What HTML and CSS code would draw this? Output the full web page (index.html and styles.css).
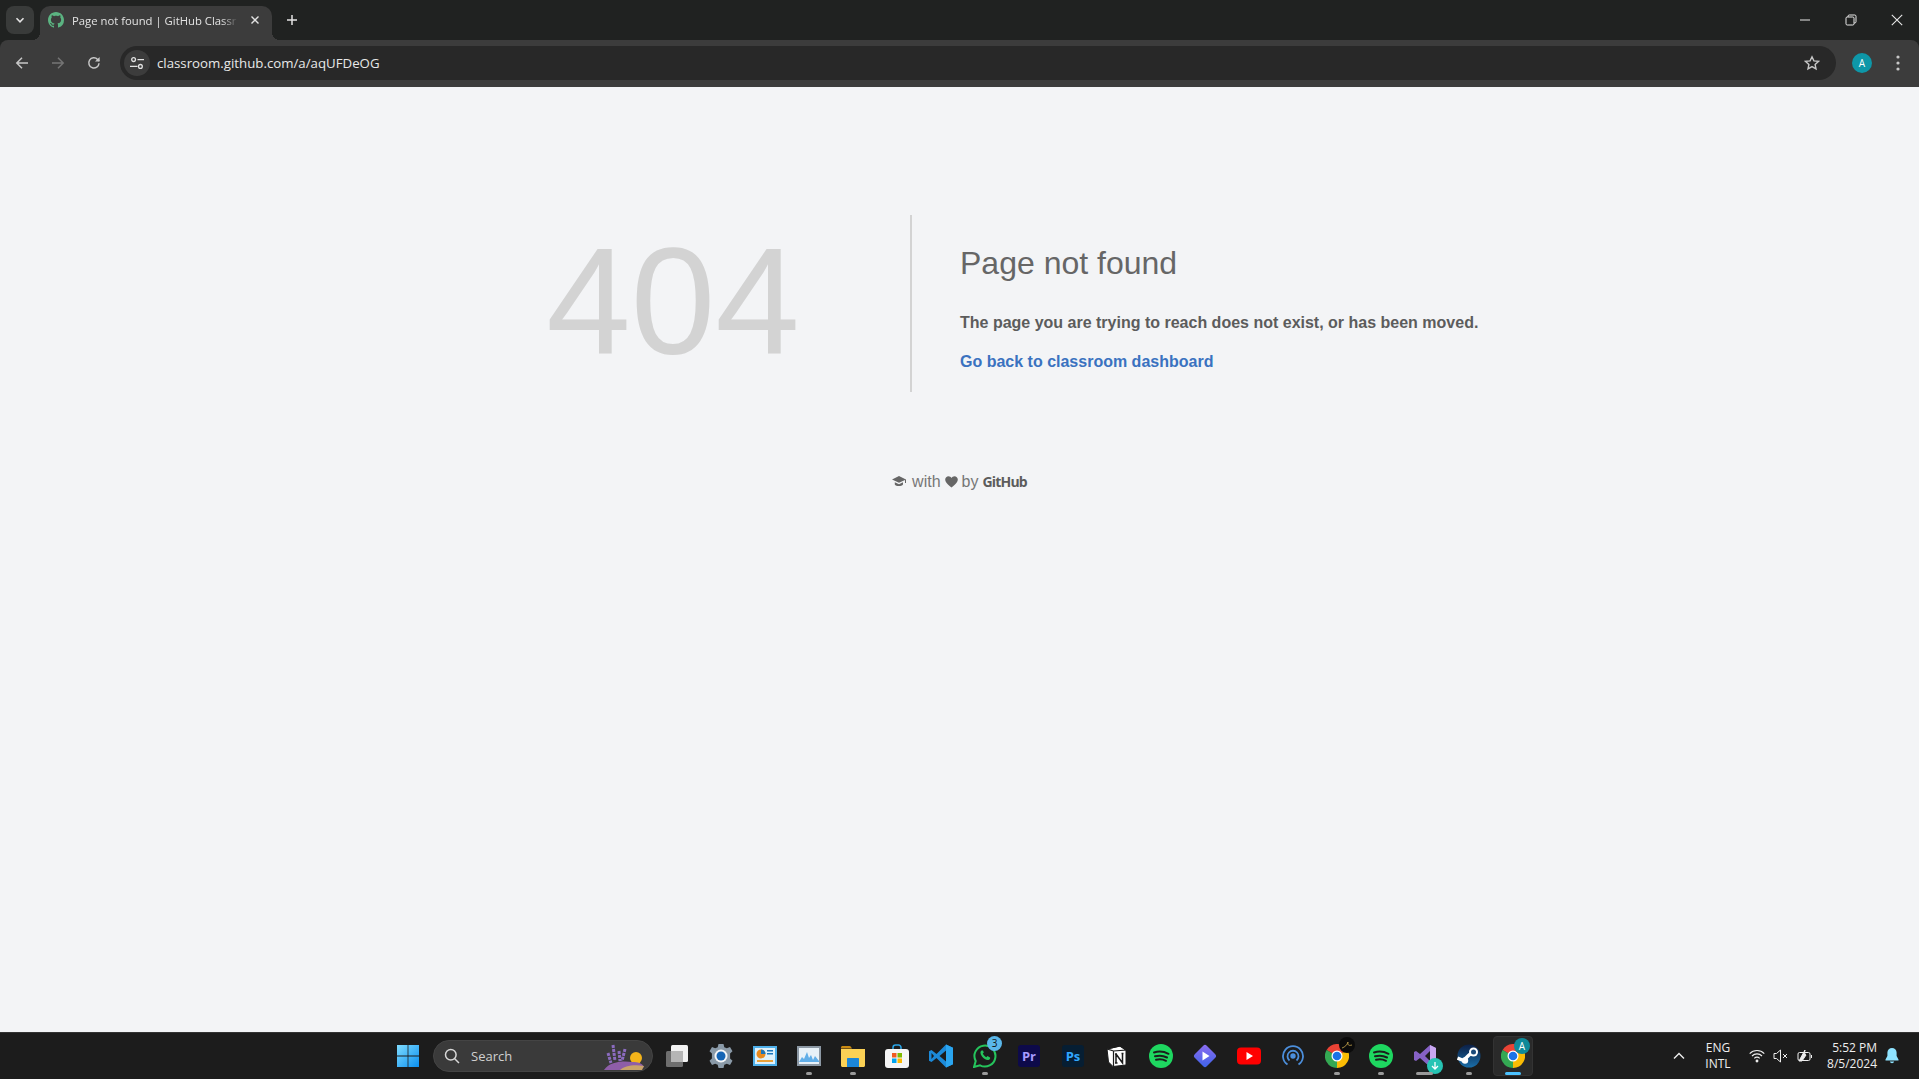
FILE: index.html
```html
<!DOCTYPE html>
<html lang="en">
<head>
    <meta charset="UTF-8">
    <title>Page not found | GitHub Classroom</title>
    <link rel="stylesheet" href="styles.css">
</head>
<body>
    <header class="chrome">
    <div class="tabstrip">
        <button class="tab-search">
            <svg width="12" height="12" viewBox="0 0 12 12"><path d="M2.5 4.3 6 7.8l3.5-3.5" fill="none" stroke="#e3e3e3" stroke-width="1.6"/></svg>
        </button>
        <div class="tab">
            <svg class="tab-favicon" width="16" height="16" viewBox="0 0 16 16"><path fill="#5bb381" d="M8 0C3.58 0 0 3.58 0 8c0 3.54 2.29 6.53 5.47 7.59.4.07.55-.17.55-.38 0-.19-.01-.82-.01-1.49-2.01.37-2.53-.49-2.69-.94-.09-.23-.48-.94-.82-1.13-.28-.15-.68-.52-.01-.53.63-.01 1.08.58 1.23.82.72 1.21 1.87.87 2.33.66.07-.52.28-.87.51-1.07-1.78-.2-3.64-.89-3.64-3.95 0-.87.31-1.59.82-2.15-.08-.2-.36-1.02.08-2.12 0 0 .67-.21 2.2.82.64-.18 1.32-.27 2-.27.68 0 1.36.09 2 .27 1.53-1.04 2.2-.82 2.2-.82.44 1.1.16 1.92.08 2.12.51.56.82 1.27.82 2.15 0 3.07-1.87 3.75-3.65 3.95.29.25.54.73.54 1.48 0 1.07-.01 1.93-.01 2.2 0 .21.15.46.55.38A8.013 8.013 0 0016 8c0-4.42-3.58-8-8-8z"/></svg>
            <span class="tab-title">Page not found | GitHub Classr</span>
            <svg class="tab-close" width="10" height="10" viewBox="0 0 10 10"><path d="M1.5 1.5l7 7M8.5 1.5l-7 7" stroke="#e3e3e3" stroke-width="1.4"/></svg>
        </div>
        <svg class="new-tab" width="12" height="12" viewBox="0 0 12 12"><path d="M6 1v10M1 6h10" stroke="#e3e3e3" stroke-width="1.5"/></svg>
        <div class="window-controls">
            <span class="win-btn"><svg width="12" height="12" viewBox="0 0 12 12"><path d="M1 6h10" stroke="#e8e8e8"/></svg></span>
            <span class="win-btn"><svg width="12" height="12" viewBox="0 0 12 12"><path d="M3 3V2.2C3 1.5 3.5 1 4.2 1h5.6c.7 0 1.2.5 1.2 1.2v5.6c0 .7-.5 1.2-1.2 1.2H9" fill="none" stroke="#e8e8e8"/><rect x="1" y="3" width="8" height="8" rx="1.2" fill="none" stroke="#e8e8e8"/></svg></span>
            <span class="win-btn"><svg width="12" height="12" viewBox="0 0 12 12"><path d="M.8.8l10.4 10.4M11.2.8.8 11.2" stroke="#e8e8e8" stroke-width="1.1"/></svg></span>
        </div>
    </div>

    <div class="toolbar">
        <div class="nav-buttons">
            <svg width="16" height="16" viewBox="0 0 16 16"><path d="M14 8H3M8 2.8 2.8 8 8 13.2" fill="none" stroke="#c7c7c7" stroke-width="1.5"/></svg>
            <svg width="16" height="16" viewBox="0 0 16 16"><path d="M2 8h11M8 2.8 13.2 8 8 13.2" fill="none" stroke="#757575" stroke-width="1.5"/></svg>
            <svg width="16" height="16" viewBox="0 0 16 16"><path d="M13 8.2A5.1 5.1 0 1 1 11.6 4.4L13.2 6" fill="none" stroke="#c7c7c7" stroke-width="1.5"/><path d="M13.6 1.9v4.6H9z" fill="#c7c7c7"/></svg>
        </div>
        <div class="omnibox">
            <span class="site-info">
                <svg width="16" height="16" viewBox="0 0 16 16" fill="none" stroke="#e3e3e3" stroke-width="1.3"><circle cx="4.6" cy="4.6" r="1.9"/><path d="M8.5 4.6H15M1 11.4h7.5"/><circle cx="11.4" cy="11.4" r="1.9"/></svg>
            </span>
            <span class="url">classroom.github.com/a/aqUFDeOG</span>
            <svg class="star" width="16" height="16" viewBox="0 0 16 16"><path d="M8 1.8l1.9 4.1 4.5.5-3.3 3 .9 4.5L8 11.6l-4 2.3.9-4.5-3.3-3 4.5-.5z" fill="none" stroke="#c7c7c7" stroke-width="1.4"/></svg>
        </div>
        <span class="avatar">A</span>
        <svg class="menu-dots" width="4" height="16" viewBox="0 0 4 16" fill="#c7c7c7"><circle cx="2" cy="2" r="1.6"/><circle cx="2" cy="8" r="1.6"/><circle cx="2" cy="14" r="1.6"/></svg>
    </div>
    </header>

    <main class="page">
        <div class="error-row">
            <div class="error-code">404</div>
            <div class="error-text">
                <h1>Page not found</h1>
                <p>The page you are trying to reach does not exist, or has been moved.</p>
                <a href="#">Go back to classroom dashboard</a>
            </div>
        </div>
        <div class="made-with">
            <svg class="cap-icon" width="15" height="11" viewBox="0 0 15 11" fill="#666"><path d="M7 0 0 3.4l7 3.4 6-2.9v3.2h1V3.4z"/><path d="M2.8 6.2v2.2C4 10.6 9.6 10.6 11 8.4V6.2L7 8.2z"/></svg>
            <span>with</span>
            <svg width="13" height="12" viewBox="0 0 13 12" fill="#666"><path d="M6.500 11.600C3 8.800.2 6.600.2 3.600.2 1.600 1.800.2 3.500.2c1.300 0 2.400.7 3 1.800.6-1.100 1.700-1.800 3-1.800 1.700 0 3.300 1.400 3.300 3.400 0 3-2.800 5.200-6.300 8z"/></svg>
            <span>by</span>
            <b class="github-word">GitHub</b>
        </div>
    </main>

    <footer class="taskbar">
        <div class="task-apps">
            <span class="task-item">
                <svg width="24" height="24" viewBox="0 0 24 24"><defs><linearGradient id="winblue" x1="0" y1="0" x2="1" y2="1"><stop offset="0" stop-color="#7fdcff"/><stop offset="1" stop-color="#0a8ff0"/></linearGradient></defs><path fill="url(#winblue)" d="M1 1h10.600v10.600H1zM12.400 1H23v10.600H12.400zM1 12.400h10.600V23H1zM12.400 12.400H23V23H12.400z"/></svg>
            </span>
            <div class="search-box">
                <svg width="16" height="16" viewBox="0 0 16 16" fill="none" stroke="#d8d8d8" stroke-width="1.5"><circle cx="6.800" cy="6.800" r="5.300"/><path d="M10.700 10.700 15 15"/></svg>
                <span>Search</span>
                <svg class="search-art" width="44" height="30" viewBox="0 0 44 30"><path d="M6 12l3 10M11 4l2 16M17 10l1 10M23 8l-3 12" stroke="#8c6cc0" stroke-width="3" stroke-dasharray="3 1"/><circle cx="34" cy="17" r="6" fill="#f4b41a"/><path d="M2 29c6-9 20-9 28-8 6 0 10 1 12 5l-6 3z" fill="#8e5ea8"/><path d="M18 29c4-4 14-6 24-4l-2 4z" fill="#c9a36a"/></svg>
            </div>
            <span class="task-item">
                <svg width="24" height="24" viewBox="0 0 24 24"><rect x="6" y="1" width="17" height="17" rx="1.500" fill="#f1f1f1"/><rect x="1" y="7" width="17" height="16" rx="1.500" fill="#6e6e6e"/><rect x="6" y="7" width="12" height="11" fill="#b5b5b5"/></svg>
            </span>
            <span class="task-item">
                <svg width="24" height="24" viewBox="0 0 24 24"><path d="M9.500 0h5l.8 3.200 2.500 1.100L21 3l2.500 4.300-2.400 2.300v4.800l2.400 2.300L21 21l-3.200-1.300-2.500 1.100L14.500 24h-5l-.8-3.200-2.500-1.100L3 21 .5 16.700l2.400-2.300V9.600L.5 7.300 3 3l3.200 1.300 2.500-1.100z" fill="#8a9aa8"/><circle cx="12" cy="12" r="6.500" fill="#f4f6f8"/><circle cx="12" cy="12" r="4.500" fill="#1565b5"/></svg>
            </span>
            <span class="task-item">
                <svg width="24" height="22" viewBox="0 0 24 22"><rect x="0" y="1" width="24" height="20" fill="#4fb0ea"/><rect x="2" y="3" width="20" height="16" fill="#dff1fb"/><circle cx="8" cy="9" r="4.500" fill="#e98a1f"/><path d="M8 9V4.500A4.500 4.500 0 0 1 12.500 9z" fill="#1b75bb"/><rect x="14" y="5" width="6" height="1.500" fill="#1b75bb"/><rect x="14" y="8" width="6" height="1.500" fill="#1b75bb"/><rect x="4" y="15" width="16" height="2" fill="#e9a23a"/></svg>
            </span>
            <span class="task-item is-open">
                <svg width="24" height="20" viewBox="0 0 24 20"><rect width="24" height="20" fill="#8c98a4"/><rect x="2" y="2" width="20" height="16" fill="#e8f1f8"/><path d="M2 16l3-5 2 2 3-7 2 6 2-3 2 5 2-4 4 5v1H2z" fill="#61aee8"/></svg>
                <i class="run-dot"></i>
            </span>
            <span class="task-item is-open">
                <svg width="24" height="24" viewBox="0 0 24 24"><path d="M0 3.500C0 2.700.7 2 1.500 2h7c.5 0 .9.200 1.200.6L11 4.500h-11z" fill="#c98a12"/><path d="M0 5h24v16.500c0 .8-.7 1.500-1.500 1.500h-21C.7 23 0 22.300 0 21.500z" fill="#fbd155"/><path d="M6 15c0-.6.400-1 1-1h10c.6 0 1 .4 1 1v8H6z" fill="#1b86d8"/></svg>
                <i class="run-dot"></i>
            </span>
            <span class="task-item">
                <svg width="24" height="24" viewBox="0 0 24 24"><path d="M8 6V3.500A2.500 2.500 0 0 1 10.500 1h3A2.500 2.500 0 0 1 16 3.500V6" fill="none" stroke="#2aa5e8" stroke-width="1.500"/><rect y="5" width="24" height="19" rx="3" fill="#f5f5f5"/><rect x="7" y="9" width="4.500" height="4.500" fill="#f05a22"/><rect x="12.500" y="9" width="4.500" height="4.500" fill="#7fba00"/><rect x="7" y="14.500" width="4.500" height="4.500" fill="#00a4ef"/><rect x="12.500" y="14.500" width="4.500" height="4.500" fill="#ffb900"/></svg>
            </span>
            <span class="task-item">
                <svg width="24" height="24" viewBox="0 0 24 24"><path d="M17 .500 24 3.800v16.400L17 23.500 7.500 14l-5 4L0 16.700V7.300L2.500 6l5 4z" fill="#1c8ad9"/><path d="M17 .500 24 3.800v16.400L17 23.500z" fill="#2aa5f0"/><path d="M17 6.500 10.500 12l6.500 5.500z" fill="#1c1c1c"/><path d="M2.500 9 5 12l-2.500 3z" fill="#1c1c1c"/></svg>
            </span>
            <span class="task-item is-open">
                <svg width="24" height="24" viewBox="0 0 24 24"><path d="M1 23l1.700-6A10.500 10.500 0 1 1 7 21.300z" fill="#1c1c1c" stroke="#25c45c" stroke-width="2"/><path d="M8.500 6.500c-1.500 1-1.500 3 .5 6 2 2.500 4.500 4 6.500 3.500 1.500-.5 2-2 1.500-2.500l-2.500-1.500-1.200 1.200c-1.500-.6-3-2.200-3.500-3.600l1-1.200L10 6.500z" fill="#25c45c"/></svg>
                <span class="count-badge">3</span>
                <i class="run-dot"></i>
            </span>
            <span class="task-item">
                <span class="adobe-tile adobe-pr">Pr</span>
            </span>
            <span class="task-item">
                <span class="adobe-tile adobe-ps">Ps</span>
            </span>
            <span class="task-item">
                <svg width="22" height="22" viewBox="0 0 22 22"><path d="M1 4 14 1l6 4v15L7 21.500 2.500 17z" fill="#fff" stroke="#1c1c1c"/><path d="M1.500 4 14 1l6 4-12.500 1zM7.500 6v15" fill="none" stroke="#1c1c1c" stroke-width="1.200"/><path d="M10 9v9M10 9l6.500 9V8.500M9 9h2M15.500 8.500h2M9 18h2.500" fill="none" stroke="#1c1c1c" stroke-width="1.500"/></svg>
            </span>
            <span class="task-item">
                <svg width="24" height="24" viewBox="0 0 24 24"><use href="#spotify-mark"/></svg>
            </span>
            <span class="task-item">
                <svg width="24" height="24" viewBox="0 0 24 24"><defs><linearGradient id="diamond" x1="0" y1="0" x2="1" y2="1"><stop offset="0" stop-color="#8d6cf0"/><stop offset="1" stop-color="#3c63e8"/></linearGradient></defs><rect x="3.500" y="3.500" width="17" height="17" rx="2.500" transform="rotate(45 12 12)" fill="url(#diamond)"/><path d="M9.500 7.500l7 4.500-7 4.500z" fill="#fff"/></svg>
            </span>
            <span class="task-item">
                <svg width="24" height="18" viewBox="0 0 24 18"><rect width="24" height="17" y=".5" rx="4" fill="#f00"/><path d="M9.500 5l6.500 4-6.500 4z" fill="#fff"/></svg>
            </span>
            <span class="task-item">
                <svg width="22" height="22" viewBox="0 0 22 22" fill="none" stroke="#4c8fdc" stroke-width="1.800"><path d="M5.500 19.500a10 10 0 1 1 11 0"/><path d="M7.500 15.500a5.500 5.500 0 1 1 7 0"/><circle cx="11" cy="11" r="1.800" fill="#4c8fdc"/></svg>
            </span>
            <span class="task-item is-open">
                <svg width="24" height="24" viewBox="0 0 24 24"><use href="#chrome-mark"/></svg>
                <span class="corner-badge corner-dark"><svg width="12" height="8" viewBox="0 0 12 8"><path d="M1 7c3-1 5-3 6-6-.5 3 .5 4 4 3" fill="none" stroke="#c9a74e" stroke-width=".8"/></svg></span>
                <i class="run-dot"></i>
            </span>
            <span class="task-item is-open">
                <svg width="24" height="24" viewBox="0 0 24 24"><use href="#spotify-mark"/></svg>
                <i class="run-dot"></i>
            </span>
            <span class="task-item is-open">
                <svg width="24" height="24" viewBox="0 0 24 24"><path d="M17 1l6 3v16l-6 3-10-9-4 3-2-1V8l2-1 4 3z" fill="#8661c5"/><path d="M17 1l6 3v16l-6 3z" fill="#c8a6f0"/><path d="M17 7l-5 5 5 5z" fill="#1c1c1c"/></svg>
                <span class="corner-badge corner-teal"><svg width="10" height="10" viewBox="0 0 10 10"><path d="M5 1v7M2 5l3 3 3-3" fill="none" stroke="#fff" stroke-width="1.300"/></svg></span>
                <i class="run-dot run-wide"></i>
            </span>
            <span class="task-item is-open">
                <svg width="24" height="24" viewBox="0 0 24 24"><defs><linearGradient id="steam" x1="0" y1="0" x2="0" y2="1"><stop offset="0" stop-color="#0c1f45"/><stop offset="1" stop-color="#1a6ea8"/></linearGradient></defs><circle cx="12" cy="12" r="11.500" fill="url(#steam)"/><path d="M.5 14l6 2.500 5-5 6-5" fill="none" stroke="#fff" stroke-width="3.500"/><circle cx="16.500" cy="8" r="4.500" fill="#fff"/><circle cx="16.500" cy="8" r="2.500" fill="#1a4a7a"/><circle cx="8" cy="16.500" r="3.200" fill="#fff"/></svg>
                <i class="run-dot"></i>
            </span>
            <span class="task-item is-active">
                <svg width="24" height="24" viewBox="0 0 24 24"><use href="#chrome-mark"/></svg>
                <span class="corner-badge corner-avatar">A</span>
                <i class="run-active"></i>
            </span>
        </div>
        <div class="tray">
            <svg class="tray-chevron" width="12" height="8" viewBox="0 0 12 8"><path d="M1 6.500 6 1.500l5 5" fill="none" stroke="#eee" stroke-width="1.400"/></svg>
            <div class="tray-lang"><span>ENG</span><span>INTL</span></div>
            <div class="tray-icons">
                <svg width="16" height="14" viewBox="0 0 16 14" fill="none" stroke="#eee" stroke-width="1.100"><path d="M.7 4.600a10.300 10.300 0 0 1 14.600 0M3 7a7 7 0 0 1 10 0M5.300 9.300a3.800 3.800 0 0 1 5.400 0"/><circle cx="8" cy="12" r=".9" fill="#eee"/></svg>
                <svg width="15" height="14" viewBox="0 0 15 14" fill="none" stroke="#eee" stroke-width="1"><path d="M1 4.500h2.500L7.500 1v12L3.500 9.500H1z"/><path d="M10 5l4 4M14 5l-4 4"/></svg>
                <svg width="17" height="14" viewBox="0 0 17 14" fill="none" stroke="#eee" stroke-width="1"><rect x="2" y="3.500" width="12" height="8" rx="1.500"/><path d="M15.500 6v3"/><path d="M3 12 9 1c-1 3 0 4 1 5l-4 6z" fill="#eee"/></svg>
            </div>
            <div class="tray-clock"><span>5:52 PM</span><span>8/5/2024</span></div>
            <svg class="tray-bell" width="14" height="16" viewBox="0 0 14 16" fill="#8fe3ff"><path d="M7 0a4.600 4.600 0 0 0-4.600 4.600V8L.5 11.500v1h13v-1L11.600 8V4.600A4.600 4.600 0 0 0 7 0z"/><path d="M4.800 13.500a2.300 2.300 0 0 0 4.400 0z"/></svg>
        </div>
    </footer>

    <!-- shared icons -->
    <svg class="icon-defs" width="0" height="0">
        <symbol id="spotify-mark" viewBox="0 0 24 24">
            <circle cx="12" cy="12" r="12" fill="#1ed760"/>
            <path d="M5 8.500c5-1.500 10-1 14.500 1.300M6 12.300c4-1.100 8.500-.7 12 1.200M7 15.800c3.500-.8 7-.5 10 1" fill="none" stroke="#1c1c1c" stroke-width="2" stroke-linecap="round"/>
        </symbol>
        <symbol id="chrome-mark" viewBox="0 0 24 24">
            <path d="M12 12 1.600 6A12 12 0 0 1 22.400 6z" fill="#ea4335"/>
            <path d="M12 12 22.400 6A12 12 0 0 1 12 24z" fill="#fbbc04"/>
            <path d="M12 12 12 24A12 12 0 0 1 1.600 6z" fill="#34a853"/>
            <circle cx="12" cy="12" r="5.500" fill="#fff"/>
            <circle cx="12" cy="12" r="4.300" fill="#1a73e8"/>
        </symbol>
    </svg>
</body>
</html>
```

FILE: styles.css
```css
* {
    box-sizing: border-box;
}
html, body {
    height: 100%;
}
body {
    margin: 0;
    display: flex;
    flex-direction: column;
    overflow: hidden;
    background: #f3f4f6;
    font-family: "Liberation Sans", Arial, sans-serif;
}

/* browser chrome */
.chrome {
    flex: none;
    background: #202221;
}
.tabstrip {
    height: 40px;
    display: flex;
    align-items: flex-end;
    padding-left: 6px;
}
.tab-search {
    width: 28px;
    height: 28px;
    margin-bottom: 6px;
    padding: 0;
    display: flex;
    align-items: center;
    justify-content: center;
    border: none;
    border-radius: 8px;
    background: #393b3a;
}
.tab {
    position: relative;
    width: 232px;
    height: 34px;
    margin-left: 6px;
    padding: 0 10px 6px 8px;
    display: flex;
    align-items: center;
    border-radius: 10px 10px 0 0;
    background: #3c3c3c;
}
.tab::before,
.tab::after {
    content: "";
    position: absolute;
    bottom: 0;
    width: 8px;
    height: 8px;
    background: #3c3c3c;
    -webkit-mask: radial-gradient(circle at 0 0, transparent 8px, #000 8px);
    mask: radial-gradient(circle at 0 0, transparent 8px, #000 8px);
}
.tab::before {
    left: -8px;
}
.tab::after {
    right: -8px;
    -webkit-mask: radial-gradient(circle at 100% 0, transparent 8px, #000 8px);
    mask: radial-gradient(circle at 100% 0, transparent 8px, #000 8px);
}
.tab-favicon {
    flex: none;
}
.tab-title {
    width: 166px;
    margin-left: 8px;
    white-space: nowrap;
    font: 11.3px "Open Sans", sans-serif;
    color: #e3e3e3;
    -webkit-mask: linear-gradient(90deg, #000 150px, transparent 166px);
    mask: linear-gradient(90deg, #000 150px, transparent 166px);
}
.tab-close {
    flex: none;
    margin-left: 12px;
}
.new-tab {
    margin: 0 0 14px 14px;
}
.window-controls {
    margin-left: auto;
    margin-right: -1px;
    align-self: stretch;
    display: flex;
}
.win-btn {
    width: 46px;
    display: flex;
    align-items: center;
    justify-content: center;
}
.toolbar {
    height: 47px;
    display: flex;
    align-items: center;
    padding: 0 19px 1px 14px;
    border-radius: 8px 8px 0 0;
    background: #3c3c3c;
}
.nav-buttons {
    width: 106px;
    display: flex;
    gap: 20px;
}
.omnibox {
    flex: 1;
    height: 34px;
    padding: 0 16px 0 4px;
    display: flex;
    align-items: center;
    border-radius: 17px;
    background: #282828;
}
.site-info {
    width: 26px;
    height: 26px;
    display: flex;
    align-items: center;
    justify-content: center;
    border-radius: 50%;
    background: #3c3c3c;
}
.url {
    margin-left: 7px;
    font: 13.25px "Open Sans", sans-serif;
    color: #e8e8e8;
}
.star {
    margin-left: auto;
}
.avatar {
    width: 20px;
    height: 20px;
    margin-left: 16px;
    display: flex;
    align-items: center;
    justify-content: center;
    border-radius: 50%;
    background: #0e97a8;
    font: 10px "Open Sans", sans-serif;
    color: #fff;
}
.menu-dots {
    margin-left: 24px;
}

/* 404 page */
.page {
    flex: 1;
    display: flex;
    flex-direction: column;
    align-items: center;
    padding-top: 128px;
    color: #5c5c5c;
}
.error-row {
    display: flex;
    height: 177px;
    margin-left: 2px;
}
.error-code {
    width: 482px;
    padding-left: 6px;
    border-right: 2px solid #d3d3d3;
    text-align: center;
    font-size: 152px;
    line-height: 172px;
    color: #d3d3d3;
}
.error-text {
    width: 579px;
    padding-left: 48px;
}
.error-text h1 {
    margin: 30px 0 33px;
    font-size: 32px;
    font-weight: normal;
    line-height: 36px;
    color: #666;
}
.error-text p {
    margin: 0 0 21px;
    font-size: 16px;
    font-weight: bold;
    line-height: 18px;
    white-space: nowrap;
}
.error-text a {
    display: block;
    font-size: 16px;
    font-weight: bold;
    line-height: 18px;
    color: #3a72c0;
    text-decoration: none;
}
.made-with {
    margin-top: 80px;
    display: flex;
    align-items: center;
    gap: 4px;
    font-size: 16px;
    color: #777;
}
.cap-icon {
    margin-right: 1px;
}
.github-word {
    font: bold 14px "Open Sans", sans-serif;
    letter-spacing: -.8px;
    color: #5c5c5c;
}

/* windows taskbar */
.taskbar {
    height: 47px;
    flex: none;
    position: relative;
    display: flex;
    justify-content: flex-end;
    align-items: center;
    border-top: 1px solid #333;
    background: #1c1c1c;
    font-family: "Open Sans", sans-serif;
    color: #eee;
}
.task-apps {
    position: absolute;
    left: 386px;
    top: 0;
    bottom: 0;
    display: flex;
    align-items: center;
}
.task-item {
    position: relative;
    width: 44px;
    height: 40px;
    display: flex;
    align-items: center;
    justify-content: center;
}
.search-box {
    width: 220px;
    height: 32px;
    margin: 0 2px 0 3px;
    padding-left: 10px;
    display: flex;
    align-items: center;
    gap: 11px;
    position: relative;
    border: 1px solid #444;
    border-radius: 16px;
    background: #3a3a3a;
    font-size: 13px;
    color: #d0d0d0;
}
.search-art {
    position: absolute;
    right: 6px;
    bottom: 0;
}
.run-dot {
    position: absolute;
    bottom: 1px;
    left: 19px;
    width: 6px;
    height: 3px;
    border-radius: 2px;
    background: #9a9a9a;
}
.run-wide {
    left: 13px;
    width: 17px;
}
.is-active {
    width: 40px;
    margin: 0 2px;
    border: 1px solid #333;
    border-radius: 4px;
    background: #2a2a2a;
}
.run-active {
    position: absolute;
    bottom: 0;
    left: 11px;
    width: 16px;
    height: 3px;
    border-radius: 2px;
    background: #4cc2ff;
}
.count-badge {
    position: absolute;
    top: 0;
    right: 5px;
    width: 15px;
    height: 15px;
    border-radius: 50%;
    background: #5ab7ea;
    font-size: 10px;
    line-height: 15px;
    text-align: center;
    color: #111;
}
.corner-badge {
    position: absolute;
    top: 1px;
    right: 4px;
    width: 16px;
    height: 16px;
    display: flex;
    align-items: center;
    justify-content: center;
    border-radius: 50%;
    font-size: 10px;
}
.corner-dark {
    background: #0b0b0b;
}
.corner-teal {
    top: auto;
    bottom: 2px;
    background: #27c4b4;
}
.corner-avatar {
    top: 1px;
    right: 2px;
    background: #0e8a99;
    color: #fff;
}
.adobe-tile {
    width: 22px;
    height: 22px;
    border-radius: 3px;
    font: bold 13px/22px "Open Sans", sans-serif;
    text-align: center;
}
.adobe-pr {
    background: #0d0a4a;
    color: #a79bff;
}
.adobe-ps {
    background: #061e33;
    color: #31a8ff;
}
.tray {
    display: flex;
    align-items: center;
    padding-right: 20px;
    font-size: 12px;
}
.tray-chevron {
    margin-right: 20px;
}
.tray-lang {
    width: 26px;
    display: flex;
    flex-direction: column;
    align-items: center;
    line-height: 16px;
}
.tray-icons {
    margin-left: 18px;
    display: flex;
    align-items: center;
    gap: 8px;
}
.tray-clock {
    width: 64px;
    display: flex;
    flex-direction: column;
    align-items: flex-end;
    line-height: 16px;
}
.tray-bell {
    margin-left: 8px;
}
.icon-defs {
    position: absolute;
}
```
